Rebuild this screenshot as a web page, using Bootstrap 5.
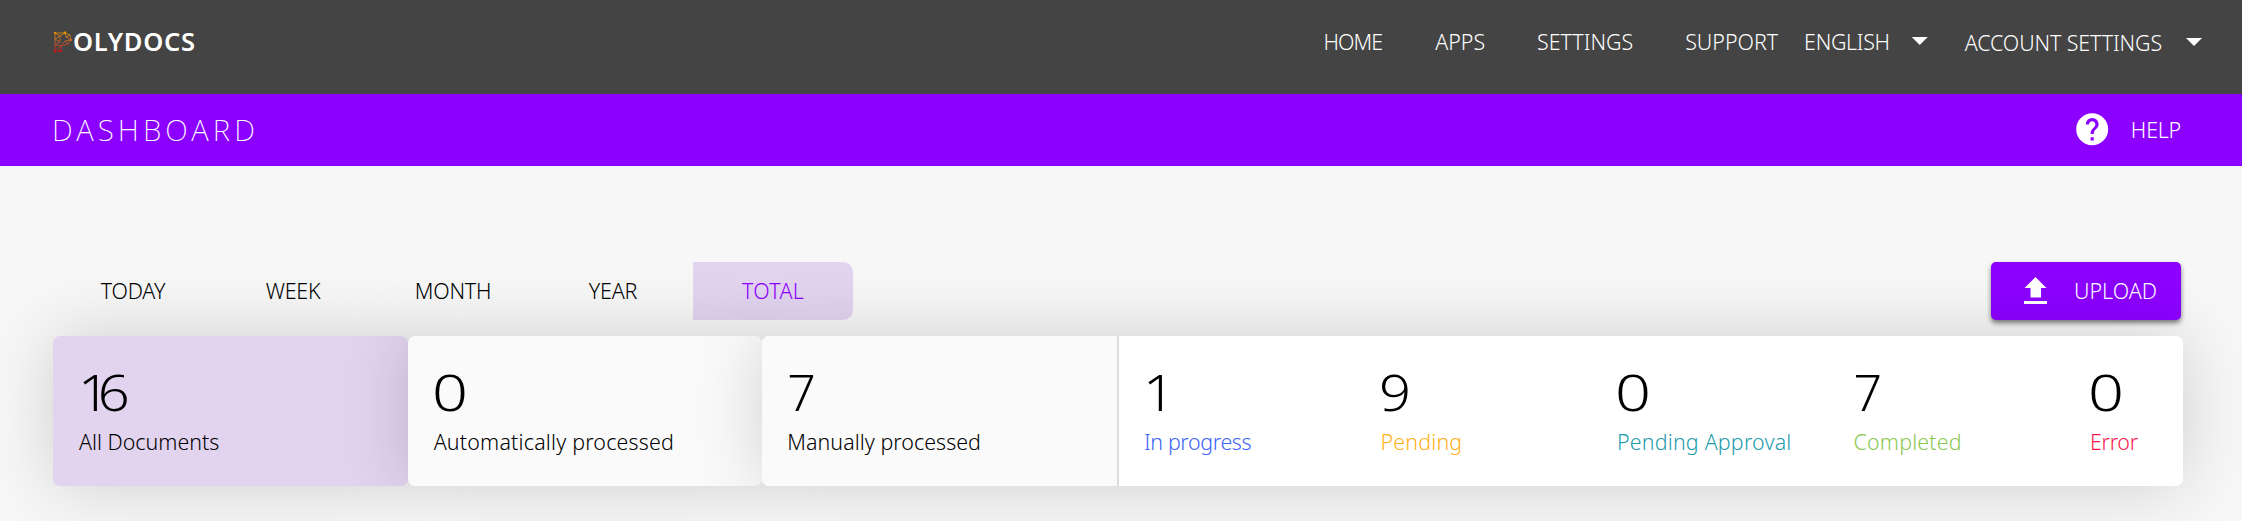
<!DOCTYPE html>
<html lang="en">
<head>
<meta charset="utf-8">
<title>Polydocs – Dashboard</title>
<link href="https://cdn.jsdelivr.net/npm/bootstrap@5.3.0/dist/css/bootstrap.min.css" rel="stylesheet">
<style>
  body { background: #f7f7f7; font-family: "Noto Sans", sans-serif; font-weight: 270; font-size: 21.4px; line-height: 32px; color: #000; }
  a { color: inherit; text-decoration: none; white-space: nowrap; }
  .topbar { height: 94px; background: #444; color: #fff; padding: 26px 40px 0 53px; }
  .brandmark { font-size: 25.5px; font-weight: 600; letter-spacing: .75px; line-height: 31px; }
  .brandmark svg { margin-top: 5px; }
  .main-nav { gap: 52px; }
  .main-nav a:first-child { letter-spacing: -.9px; margin-right: 1px; }
  .lang { margin-left: 26px; letter-spacing: -.3px; }
  .account { margin: 1px 0 0 37px; letter-spacing: -.1px; }
  .caret-down { width: 16px; height: 8px; margin: 11px 0 0 22px; background: #fff; clip-path: polygon(0 0, 100% 0, 50% 100%); }
  .account .caret-down { margin-left: 24px; }
  .pagebar { height: 72px; background: #8c00ff; color: #fff; padding: 0 61px 0 52px; }
  .pagebar h1 { font-size: 29.5px; font-weight: 240; letter-spacing: 4.1px; line-height: 40px; margin-top: -1px; }
  .pagebar svg { margin: -2px 19px 0 0; }
  .pagebar a { letter-spacing: -.2px; line-height: 31px; }
  .toolbar-row { margin: 96px 61px 16px 53px; height: 58px; }
  .period { width: 160px; height: 58px; line-height: 57px; text-align: center; letter-spacing: -.2px; }
  .period.active { background: #e2d3ef; color: #8c00ff; border-radius: 0 10px 10px 0; letter-spacing: .3px; }
  .upload { width: 190px; height: 58px; background: #8c00ff; color: #fff; border-radius: 5px; padding-left: 33px; box-shadow: 0 3px 5px rgba(0,0,0,.5); }
  .upload svg { margin: -1px 27px 0 0; }
  .stats { margin: 0 59px 0 53px; height: 150px; }
  .raised { box-shadow: 0 0 70px rgba(0,0,0,.165); border-radius: 7px; }
  .stat { padding: 27px 0 0 26px; white-space: nowrap; }
  .stat b { display: block; font-size: 50px; font-weight: 270; line-height: 58px; letter-spacing: -11px; transform: scaleX(1.12); transform-origin: 0 50%; margin-left: -1px; }
  .stat b.zero { transform: scaleX(1.26); margin-left: -2px; }
  .stat b.seven { transform: scaleX(1); margin-left: 0; }
  .stat span { display: block; letter-spacing: .2px; margin-top: 5px; }
  .total-card { width: 354.67px; flex: none; background: #fafafa; }
  .total-card.selected { background: #e2d3ef; }
  .total-card.selected span { letter-spacing: 0; }
  .status-group .total-card { padding-left: 25px; }
  .status-group .total-card span { letter-spacing: .05px; }
  .statuses { border-left: 2px solid #dcdcdc; }
  .statuses .stat { width: 236.5px; flex: none; padding-left: 25px; }
  .in-progress { color: #3d63f5; }
  .stat .in-progress { letter-spacing: -.35px; }
  .pending { color: #ffb020; }
  .approval { color: #1c9cac; }
  .completed { color: #8bc850; }
  .failed { color: #f51850; }
  .stat .failed { letter-spacing: -.3px; }
</style>
</head>
<body class="min-vh-100">
<header class="topbar d-flex justify-content-between align-items-start">
  <a href="#" class="brandmark d-flex">
    <svg width="20" height="22" viewBox="0 0 20 22" fill="none" stroke-width=".75">
      <defs><linearGradient id="flame" x1="0" y1="0" x2="0" y2="22" gradientUnits="userSpaceOnUse"><stop stop-color="#f5a000"/><stop offset=".5" stop-color="#d9622a"/><stop offset="1" stop-color="#d00018"/></linearGradient></defs>
      <path stroke="url(#flame)" d="M2 2H12L17 4 18 9 15 13 8 15V20H2ZM2 2 7 5 12 2 13 6 17 4M2 8 7 5M13 6 18 9 12 10 15 13M2 14 7 11M12 10 8 15 2 14M2 8 7 11M7 5V11M2 20 8 15"/>
      <g fill="url(#flame)"><circle cx="2" cy="2" r="1.1"/><circle cx="12" cy="1.8" r="1.3"/><circle cx="18" cy="9" r="1"/><circle cx="2" cy="20.300" r="1.2"/><circle cx="7.500" cy="20" r="1.3"/></g>
    </svg><span>OLYDOCS</span>
  </a>
  <nav class="d-flex">
    <div class="main-nav d-flex">
      <a href="#">HOME</a><a href="#">APPS</a><a href="#">SETTINGS</a><a href="#">SUPPORT</a>
    </div>
    <a href="#" class="lang d-flex">ENGLISH<i class="caret-down"></i></a>
    <a href="#" class="account d-flex">ACCOUNT SETTINGS<i class="caret-down"></i></a>
  </nav>
</header>
<section class="pagebar d-flex justify-content-between align-items-center">
  <h1 class="mb-0">DASHBOARD</h1>
  <a href="#" class="d-flex align-items-center">
    <svg width="38.4" height="38.4" viewBox="0 0 24 24" fill="#fff"><path d="M12 2C6.480 2 2 6.480 2 12s4.480 10 10 10 10-4.480 10-10S17.520 2 12 2zm1 17h-2v-2h2v2zm2.070-7.750-.9.920C13.450 12.900 13 13.500 13 15h-2v-.5c0-1.100.450-2.100 1.170-2.830l1.240-1.260c.370-.360.590-.860.590-1.410 0-1.100-.9-2-2-2s-2 .9-2 2H8c0-2.210 1.790-4 4-4s4 1.790 4 4c0 .880-.360 1.680-.930 2.250z"/></svg>HELP
  </a>
</section>
<main>
  <div class="toolbar-row d-flex justify-content-between">
    <div class="d-flex">
      <a href="#" class="period">TODAY</a><a href="#" class="period">WEEK</a><a href="#" class="period">MONTH</a><a href="#" class="period">YEAR</a><a href="#" class="period active">TOTAL</a>
    </div>
    <a href="#" class="upload d-flex align-items-center"><svg width="23" height="27" viewBox="0 0 23 27" fill="#fff"><path d="M11.500 0 22.500 11H17v9.500H6.500V11H.5ZM0 24h23v3H0Z"/></svg><span>UPLOAD</span></a>
  </div>
  <div class="stats d-flex position-relative">
    <div class="stat total-card selected raised"><b>16</b><span>All Documents</span></div>
    <div class="stat total-card raised position-relative"><b class="zero">0</b><span>Automatically processed</span></div>
    <div class="status-group raised position-relative d-flex flex-grow-1 bg-white overflow-hidden">
      <div class="stat total-card"><b class="seven">7</b><span>Manually processed</span></div>
      <div class="statuses d-flex flex-grow-1">
        <div class="stat"><b>1</b><span class="in-progress">In progress</span></div>
        <div class="stat"><b>9</b><span class="pending">Pending</span></div>
        <div class="stat"><b class="zero">0</b><span class="approval">Pending Approval</span></div>
        <div class="stat"><b class="seven">7</b><span class="completed">Completed</span></div>
        <div class="stat"><b class="zero">0</b><span class="failed">Error</span></div>
      </div>
    </div>
  </div>
</main>
<script src="https://cdn.jsdelivr.net/npm/bootstrap@5.3.0/dist/js/bootstrap.bundle.min.js"></script>
</body>
</html>
